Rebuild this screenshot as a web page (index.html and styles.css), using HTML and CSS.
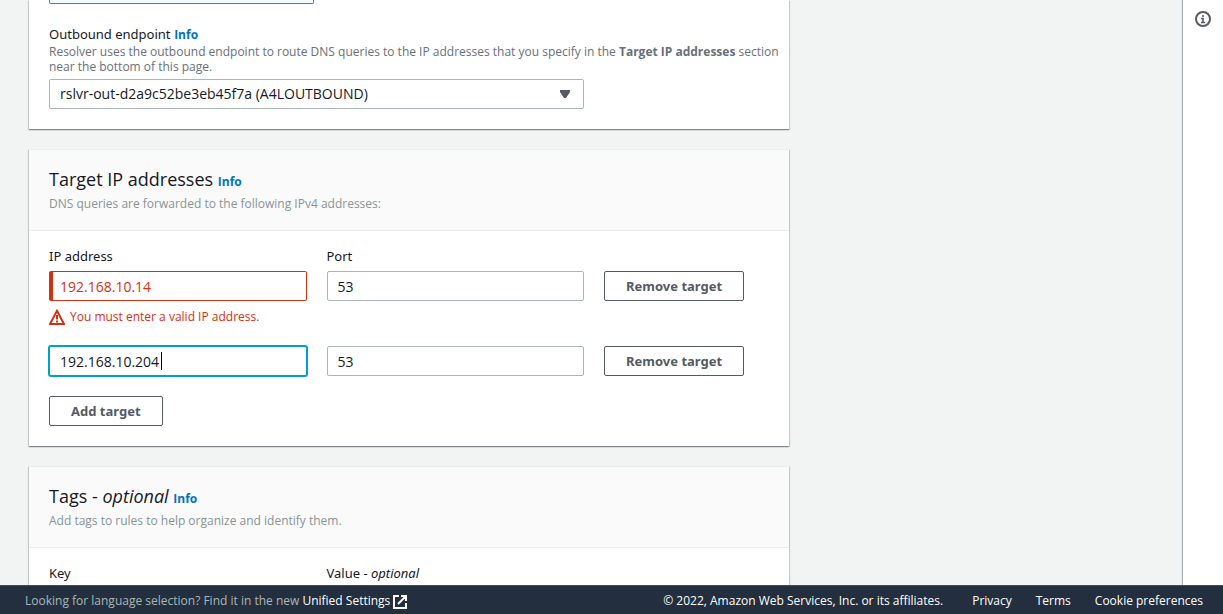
FILE: index.html
```html
<!DOCTYPE html>
<html lang="en">
<head>
<meta charset="utf-8">
<meta name="viewport" content="width=device-width, initial-scale=1">
<title>Create rule</title>
<link rel="stylesheet" href="styles.css">
</head>
<body>
<div class="workspace">
  <main class="content">
    <section class="card">
      <div class="card-body endpoint-body">
        <div class="form-grid"><div class="tile"></div></div>
        <div>
          <div class="label-line"><label for="endpoint">Outbound endpoint</label> <a class="info" href="#">Info</a></div>
          <p class="hint">Resolver uses the outbound endpoint to route DNS queries to the IP addresses that you specify in the <strong>Target IP addresses</strong> section near the bottom of this page.</p>
          <div class="form-grid">
            <div class="select-wrap">
              <select class="field" id="endpoint"><option>rslvr-out-d2a9c52be3eb45f7a (A4LOUTBOUND)</option></select>
              <svg class="arrow" width="12" height="8" viewBox="0 0 12 8" aria-hidden="true"><path d="M1 0h10v2L7 8H5L1 2z"/></svg>
            </div>
          </div>
        </div>
      </div>
    </section>

    <section class="card">
      <header class="card-header">
        <h2>Target IP addresses <a class="info" href="#">Info</a></h2>
        <p>DNS queries are forwarded to the following IPv4 addresses:</p>
      </header>
      <div class="card-body">
        <div class="form-grid labels">
          <label class="span3" for="ip1">IP address</label>
          <label class="span3" for="port1">Port</label>
        </div>
        <div class="form-grid">
          <div class="span3">
            <input class="field invalid" id="ip1" type="text" value="192.168.10.14" aria-invalid="true" aria-describedby="ip1-error">
            <div class="error" id="ip1-error">
              <svg width="16" height="16" viewBox="0 0 16 16" aria-hidden="true"><path d="M8 1.8 15 15H1z" fill="none" stroke="currentColor" stroke-width="2"/><path d="M8 6v4.5M8 11.5v2" fill="none" stroke="currentColor" stroke-width="2"/></svg>
              <span>You must enter a valid IP address.</span>
            </div>
          </div>
          <div class="span3"><input class="field" id="port1" type="text" value="53"></div>
          <div class="span2"><button class="button" type="button">Remove target</button></div>
        </div>
        <div class="form-grid next-row">
          <div class="span3 caret-wrap"><input class="field focused" type="text" value="192.168.10.204" aria-label="IP address"><span class="caret"></span></div>
          <div class="span3"><input class="field" type="text" value="53" aria-label="Port"></div>
          <div class="span2"><button class="button" type="button">Remove target</button></div>
        </div>
        <button class="button add" type="button">Add target</button>
      </div>
    </section>

    <section class="card">
      <header class="card-header">
        <h2>Tags - <em>optional</em> <a class="info" href="#">Info</a></h2>
        <p>Add tags to rules to help organize and identify them.</p>
      </header>
      <div class="card-body">
        <div class="form-grid labels">
          <label class="span3" for="key">Key</label>
          <label class="span3" for="value">Value - <em>optional</em></label>
        </div>
        <div class="form-grid">
          <div class="span3"><input class="field" id="key" type="text"></div>
          <div class="span3"><input class="field" id="value" type="text"></div>
        </div>
      </div>
    </section>
  </main>
  <aside class="help">
    <button type="button" aria-label="Open help panel">
      <svg width="16" height="16" viewBox="0 0 16 16" fill="none" stroke="currentColor" aria-hidden="true"><circle cx="8" cy="8" r="7" stroke-width="2"/><path d="M8 4v2M6 7.5h2V11M6 11.5h4" stroke-width="1.6"/></svg>
    </button>
  </aside>
</div>
<footer class="footer">
  <div class="language">Looking for language selection? Find it in the new <a href="#">Unified Settings<svg width="14" height="14" viewBox="0 0 14 14" fill="none" stroke="currentColor" stroke-width="2" aria-hidden="true"><path d="M6 1H1v12h12V8M8 1h5v5M13 1 5 9"/></svg></a></div>
  <nav class="legal">
    <span class="copyright">© 2022, Amazon Web Services, Inc. or its affiliates.</span>
    <a href="#">Privacy</a>
    <a href="#">Terms</a>
    <a href="#">Cookie preferences</a>
  </nav>
</footer>
</body>
</html>
```

FILE: styles.css
```css
* { box-sizing: border-box; }

body {
  margin: 0;
  height: 100vh;
  display: flex;
  flex-direction: column;
  overflow: hidden;
  background: #f2f3f3;
  color: #16191f;
  font: 14px/20px "Open Sans", "Noto Sans", sans-serif;
}

a { color: #0073bb; text-decoration: none; }
h2, p { margin: 0; }

.workspace { flex: 1; min-height: 0; display: flex; }

.content {
  flex: 1;
  min-width: 0;
  padding: 0 29px;
  overflow: hidden;
  display: flex;
  flex-direction: column;
  gap: 20px;
}

.card {
  flex: none;
  width: 100%;
  max-width: 760px;
  background: #fff;
  border-top: 1px solid #eaeded;
  box-shadow: 0 1px 1px 0 rgba(0, 28, 36, 0.3), 1px 1px 1px 0 rgba(0, 28, 36, 0.15), -1px 1px 1px 0 rgba(0, 28, 36, 0.15);
}
.card:first-child { border-top: 0; }

.card-header {
  padding: 17px 20px 18px;
  background: #fafafa;
  border-bottom: 1px solid #eaeded;
}
.card-header h2 { font-size: 18px; font-weight: 400; line-height: 24px; }
.card-header p { margin-top: 5px; color: #879596; font-size: 12px; line-height: 16px; }

label { font-family: "Noto Sans", "Open Sans", sans-serif; font-size: 13px; }
.info { font-size: 12px; font-weight: 700; line-height: 16px; }

.card-body { padding: 15px 20px 20px; }
.endpoint-body { padding-top: 0; display: grid; gap: 20px; }

.form-grid { display: grid; grid-template-columns: repeat(8, minmax(0, 1fr)); column-gap: 20px; }
.span3 { grid-column: span 3; }
.span2 { grid-column: span 2; }
.labels { margin-bottom: 5px; }
.next-row { margin-top: 19px; }

.tile {
  grid-column: span 3;
  width: 265px;
  height: 4px;
  background: #f1faff;
  border: 1px solid #00a1c9;
  border-top: 0;
  border-radius: 0 0 2px 2px;
}

.hint { margin: 0 -15px 5px 0; color: #687078; font-size: 12px; line-height: 15px; }

.field {
  display: block;
  width: 100%;
  height: 30px;
  margin: 0;
  padding: 0 10px;
  border: 1px solid #aab7b8;
  border-radius: 2px;
  background: #fff;
  color: #16191f;
  font: inherit;
  outline: 0;
  appearance: none;
}
.invalid { border-color: #d13212; border-left-width: 4px; padding-left: 7px; color: #d13212; }
.focused { border-color: #00a1c9; box-shadow: 0 0 0 1px #00a1c9; }

.select-wrap { grid-column: span 6; position: relative; }
.arrow { position: absolute; right: 13px; top: 11px; fill: #545b64; pointer-events: none; }

.caret-wrap { position: relative; }
.caret { position: absolute; left: 112px; top: 6px; width: 1px; height: 18px; background: #000; }

.error { margin-top: 6px; display: flex; align-items: center; gap: 5px; color: #d13212; font-size: 12px; }

.button {
  height: 30px;
  padding: 0 21px;
  border: 1px solid #545b64;
  border-radius: 2px;
  background: #fff;
  color: #545b64;
  font-family: "Noto Sans", "Open Sans", sans-serif;
  font-size: 13px;
  font-weight: 700;
  line-height: 20px;
  white-space: nowrap;
}
.add { display: block; margin-top: 20px; }

.help {
  flex: none;
  width: 40px;
  padding-top: 11px;
  background: #fff;
  box-shadow: -1px 0 1px rgba(0, 28, 36, 0.3);
  text-align: center;
}
.help button { display: block; margin: 0 auto; padding: 0; border: 0; background: none; color: #545b64; }
.help svg { display: block; }

.footer {
  position: relative;
  flex: none;
  min-height: 29px;
  padding: 5px 20px 3px 25px;
  display: flex;
  align-items: center;
  justify-content: space-between;
  background: #232f3e;
  border-top: 1px solid #414d5c;
  color: #aab7b8;
  font-size: 12px;
}
.footer a, .copyright { color: #fff; }
.language svg { margin-left: 3px; vertical-align: middle; }
.legal { display: flex; gap: 24px; }
.copyright { margin-right: 5px; }
```
